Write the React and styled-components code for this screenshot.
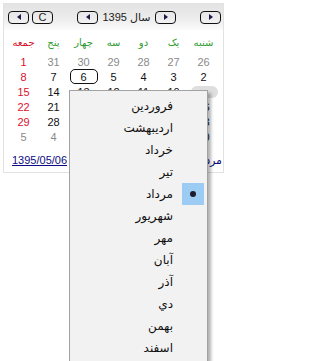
import React from 'react';
import styled, { createGlobalStyle } from 'styled-components';

const GlobalStyle = createGlobalStyle`
  html, body {
    margin: 0;
    padding: 0;
    background: #ffffff;
    overflow: hidden;
  }
  body {
    font-family: 'Liberation Sans', 'DejaVu Sans', sans-serif;
  }
`;

const dayNames = [
  { label: 'شنبه', holiday: false },
  { label: 'یک', holiday: false },
  { label: 'دو', holiday: false },
  { label: 'سه', holiday: false },
  { label: 'چهار', holiday: false },
  { label: 'پنج', holiday: false },
  { label: 'جمعه', holiday: true },
];

// each row is laid out right to left: شنبه ... جمعه
const weeks = [
  [26, 27, 28, 29, 30, 31, 1].map((n, i) => ({ n, muted: i < 6 })),
  [2, 3, 4, 5, 6, 7, 8].map((n) => ({ n, selected: n === 6 })),
  [9, 10, 11, 12, 13, 14, 15].map((n) => ({ n })),
  [16, 17, 18, 19, 20, 21, 22].map((n) => ({ n })),
  [23, 24, 25, 26, 27, 28, 29].map((n) => ({ n })),
  [30, 31, 1, 2, 3, 4, 5].map((n, i) => ({ n, muted: i > 1 })),
];

const months = [
  'فروردین', 'اردیبهشت', 'خرداد', 'تیر', 'مرداد', 'شهریور',
  'مهر', 'آبان', 'آذر', 'دي', 'بهمن', 'اسفند',
];

const App = () => {
  return (
    <Page>
      <GlobalStyle />
      <Calendar>
        <Header>
          <Group>
            <NavButton><Arrow $dir="left" /></NavButton>
            <NavButton>C</NavButton>
          </Group>
          <Group>
            <NavButton><Arrow $dir="left" /></NavButton>
            <YearLabel dir="rtl">سال 1395</YearLabel>
            <NavButton><Arrow $dir="right" /></NavButton>
          </Group>
          <Group>
            <NavButton><Arrow $dir="right" /></NavButton>
          </Group>
        </Header>

        <DayGrid>
          {dayNames.map((d) => (
            <DayName key={d.label} $holiday={d.holiday}>{d.label}</DayName>
          ))}
        </DayGrid>

        <DateGrid>
          {weeks.map((week, r) =>
            week.map((c, i) => (
              <DateCell
                key={`${r}-${i}`}
                $muted={c.muted}
                $holiday={i === 6 && !c.muted}
                $selected={c.selected}
              >
                {c.n}
              </DateCell>
            ))
          )}
        </DateGrid>

        <Footer>
          <TodayLink href="#">1395/05/06</TodayLink>
          <MonthCaption dir="rtl">مرداد</MonthCaption>
        </Footer>
      </Calendar>

      <HoverGlow />

      <MonthMenu dir="rtl">
        {months.map((m) => (
          <MenuItem key={m}>
            <CheckSlot $active={m === 'مرداد'}>
              {m === 'مرداد' && <Bullet />}
            </CheckSlot>
            <MenuLabel>{m}</MenuLabel>
          </MenuItem>
        ))}
      </MonthMenu>
    </Page>
  );
};

const Page = styled.div`
  position: relative;
  width: 227px;
  height: 361px;
`;

const Calendar = styled.div`
  margin: 3px 3px 0 3px;
  width: 219px;
  border: 1px solid #e2e2e2;
  background: #ffffff;
  padding-bottom: 4px;
`;

const Header = styled.div`
  display: flex;
  justify-content: space-between;
  align-items: center;
  height: 26px;
  padding: 0 2px 0 4px;
  background: linear-gradient(to bottom, #e3e3e3 0%, #ececec 55%, #fbfbfb 100%);
`;

const Group = styled.div`
  display: flex;
  align-items: center;
  gap: 3px;
`;

const NavButton = styled.div`
  box-sizing: border-box;
  width: 21px;
  height: 13px;
  border: 1px solid #111;
  border-radius: 4px;
  display: flex;
  align-items: center;
  justify-content: center;
  font-size: 11px;
  line-height: 1;
  color: #222;
  background: transparent;
`;

const Arrow = styled.span`
  width: 0;
  height: 0;
  border-top: 3px solid transparent;
  border-bottom: 3px solid transparent;
  ${(p) => (p.$dir === 'left'
    ? 'border-right: 4px solid #1c1c4a;'
    : 'border-left: 4px solid #1c1c4a;')}
`;

const YearLabel = styled.span`
  font-size: 11px;
  color: #222;
  width: 51px;
  text-align: center;
  white-space: nowrap;
`;

const DayGrid = styled.div`
  direction: rtl;
  display: grid;
  grid-template-columns: repeat(7, 30px);
  justify-content: center;
  margin-top: 4px;
  height: 16px;
  align-items: center;
`;

const DayName = styled.div`
  text-align: center;
  font-size: 10px;
  color: ${(p) => (p.$holiday ? '#d8102c' : '#2e9b2e')};
`;

const DateGrid = styled.div`
  direction: rtl;
  display: grid;
  grid-template-columns: repeat(7, 30px);
  grid-auto-rows: 15px;
  justify-content: center;
  margin-top: 4px;
`;

const DateCell = styled.div`
  box-sizing: border-box;
  display: flex;
  align-items: center;
  justify-content: center;
  font-size: 11px;
  margin: 0 ${(p) => (p.$selected ? '1px' : '0')};
  color: ${(p) => (p.$muted ? '#8a8a8a' : p.$holiday ? '#d8102c' : '#111')};
  border: 1px solid ${(p) => (p.$selected ? '#111' : 'transparent')};
  border-radius: 5px;
`;

const Footer = styled.div`
  display: flex;
  justify-content: space-between;
  align-items: center;
  height: 16px;
  margin-top: 8px;
  padding: 0 1px 0 8px;
`;

const TodayLink = styled.a`
  font-size: 11px;
  color: #0c0c80;
  text-decoration: underline;
`;

const MonthCaption = styled.span`
  font-size: 11px;
  color: #0c0c80;
`;

const HoverGlow = styled.div`
  position: absolute;
  left: 191px;
  top: 83px;
  width: 27px;
  height: 12px;
  border-radius: 6px;
  background: #dedede;
`;

const MonthMenu = styled.div`
  position: absolute;
  left: 69px;
  top: 87px;
  box-sizing: border-box;
  width: 139px;
  padding: 4px 0 2px;
  background: #f2f2f2;
  border: 1px solid #a2a2a2;
  box-shadow: 3px 3px 3px rgba(0, 0, 0, 0.3);
`;

const MenuItem = styled.div`
  display: flex;
  align-items: center;
  height: 22px;
  gap: 9px;
`;

const CheckSlot = styled.div`
  width: 22px;
  height: 22px;
  margin-right: 3px;
  display: flex;
  align-items: center;
  justify-content: center;
  background: ${(p) => (p.$active ? '#9ccbf4' : 'transparent')};
`;

const Bullet = styled.span`
  width: 6px;
  height: 6px;
  border-radius: 50%;
  background: #1d1d2a;
`;

const MenuLabel = styled.span`
  font-family: 'DejaVu Sans', sans-serif;
  font-size: 12px;
  color: #111;
  white-space: nowrap;
`;

export default App;
